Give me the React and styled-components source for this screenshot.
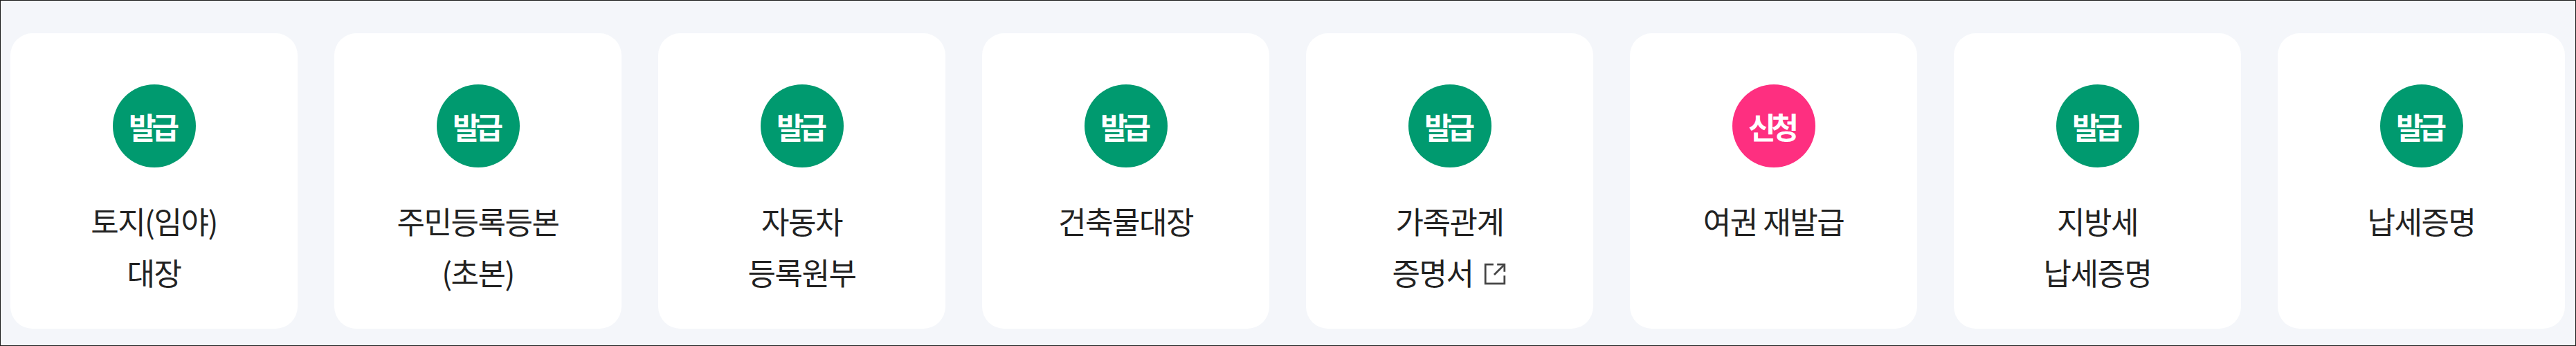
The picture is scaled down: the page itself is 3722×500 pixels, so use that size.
import React from "react"
import styled, { createGlobalStyle } from "styled-components"

const GlobalStyle = createGlobalStyle`
	html, body {
		margin: 0;
		padding: 0;
		background: #ffffff;
	}
	body {
		font-family: "Noto Sans CJK KR", "Noto Sans", sans-serif;
	}
`

const Frame = styled.div`
	box-sizing: border-box;
	width: 3722px;
	height: 500px;
	border: 1px solid #1b1b1b;
	background-color: #f4f6fa;
	padding: 47px 15px 0 14px;
`

const Grid = styled.ul`
	list-style: none;
	margin: 0;
	padding: 0;
	display: grid;
	grid-template-columns: repeat(8, 415px);
	column-gap: 53px;
`

const Card = styled.li`
	height: 427px;
	border-radius: 32px;
	background-color: #ffffff;
	display: flex;
	flex-direction: column;
	align-items: center;
	padding-top: 74px;
	box-sizing: border-box;
`

const Badge = styled.span`
	width: 120px;
	height: 120px;
	border-radius: 50%;
	background-color: ${({ kind }) => (kind === "apply" ? "#fe2f80" : "#009a6f")};
	color: #ffffff;
	display: flex;
	align-items: center;
	justify-content: center;
	font-size: 43px;
	font-weight: 700;
	letter-spacing: -6px;
	text-indent: -6px;
	line-height: 1;
`

const Label = styled.p`
	margin: 40px 0 0;
	font-size: 44px;
	line-height: 74px;
	letter-spacing: -1.5px;
	color: #222222;
	text-align: center;
`

const Line = styled.span`
	display: flex;
	align-items: center;
	justify-content: center;
`

const LinkIcon = styled.svg`
	width: 34px;
	height: 34px;
	margin-left: 15px;
	margin-top: 6px;
	color: #444444;
`

const services = [
	{ id: 1, kind: "issue", lines: ["토지(임야)", "대장"] },
	{ id: 2, kind: "issue", lines: ["주민등록등본", "(초본)"] },
	{ id: 3, kind: "issue", lines: ["자동차", "등록원부"] },
	{ id: 4, kind: "issue", lines: ["건축물대장"] },
	{ id: 5, kind: "issue", lines: ["가족관계", "증명서"], external: true },
	{ id: 6, kind: "apply", lines: ["여권 재발급"] },
	{ id: 7, kind: "issue", lines: ["지방세", "납세증명"] },
	{ id: 8, kind: "issue", lines: ["납세증명"] },
]

const ExternalIcon = () => (
	<LinkIcon viewBox="0 0 16 16" fill="none" stroke="currentColor" strokeWidth="1.3">
		<path d="M7 1.5H1.5v13h13V9" />
		<path d="M7.5 8.5L14.5 1.5" />
		<path d="M9.5 1.5h5v5" />
	</LinkIcon>
)

const App = () => {
	return (
		<>
			<GlobalStyle />
			<Frame>
				<Grid>
					{services.map(item => (
						<Card key={item.id}>
							<Badge kind={item.kind}>{item.kind === "apply" ? "신청" : "발급"}</Badge>
							<Label>
								{item.lines.map((line, i) => (
									<Line key={line}>
										{line}
										{item.external && i === item.lines.length - 1 && <ExternalIcon />}
									</Line>
								))}
							</Label>
						</Card>
					))}
				</Grid>
			</Frame>
		</>
	)
}

export default App
